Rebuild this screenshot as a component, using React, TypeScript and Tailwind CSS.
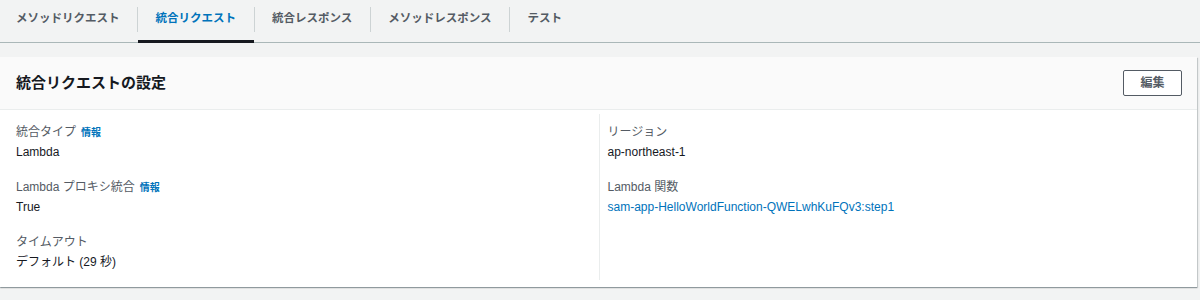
const FONT = "font-['Liberation_Sans','Noto_Sans_CJK_JP',sans-serif]";

const TABS = ["メソッドリクエスト", "統合リクエスト", "統合レスポンス", "メソッドレスポンス", "テスト"];

function InfoLink() {
  return <span className="ml-[5px] text-[10px] font-bold text-[#0073bb]">情報</span>;
}

function Field({ label, info, children }: { label: string; info?: boolean; children: React.ReactNode }) {
  return (
    <div>
      <div className="flex items-center h-5 text-[12px] text-[#545b64]">
        {label}
        {info && <InfoLink />}
      </div>
      <div className="h-5 leading-5 text-[12px] text-[#16191f]">{children}</div>
    </div>
  );
}

export default function App() {
  const active = 1;

  return (
    <div className={`min-h-[300px] bg-[#f2f3f3] ${FONT}`}>
      {/* Tabs */}
      <div className="flex items-stretch h-[43px] border-b border-[#aab7b8]">
        {TABS.map((tab, i) => (
          <div key={tab} className="flex items-center">
            {i > 0 && <div className="w-px h-[25px] bg-[#cdd3d4] -mt-[4px]" />}
            <div
              className={`relative h-full flex items-center pb-[4px] text-[11.5px] font-bold ${
                i === 0 ? "pl-4 pr-[17.5px]" : "px-[17.5px]"
              } ${i === active ? "text-[#0073bb]" : "text-[#545b64]"}`}
            >
              {tab}
              {i === active && <div className="absolute left-0 right-0 -bottom-px h-[3px] bg-[#16191f]" />}
            </div>
          </div>
        ))}
      </div>

      {/* Card */}
      <div className="mt-[14px] mr-[3px] bg-white shadow-[0_1px_1px_0_rgba(0,28,36,0.3),1px_1px_1px_0_rgba(0,28,36,0.15)]">
        <div className="h-[53px] flex items-center justify-between pl-4 pr-[15px] bg-[#fafafa] border-b border-[#eaeded]">
          <h2 className="text-[15px] font-bold text-[#16191f]">統合リクエストの設定</h2>
          <button className="w-[59px] h-[26px] border border-[#545b64] rounded-[2px] bg-white text-[12px] font-bold text-[#545b64]">
            編集
          </button>
        </div>

        <div className="grid grid-cols-2 pt-1 pb-[7px]">
          <div className="pl-4 pt-2 pb-2 flex flex-col gap-[15px]">
            <Field label="統合タイプ" info>
              Lambda
            </Field>
            <Field label="Lambda プロキシ統合" info>
              True
            </Field>
            <Field label="タイムアウト">デフォルト (29 秒)</Field>
          </div>
          <div className="border-l border-[#eaeded] pl-[8px] pt-2 pb-2 flex flex-col gap-[15px]">
            <Field label="リージョン">ap-northeast-1</Field>
            <Field label="Lambda 関数">
              <span className="text-[#0073bb]">sam-app-HelloWorldFunction-QWELwhKuFQv3:step1</span>
            </Field>
          </div>
        </div>
      </div>
    </div>
  );
}
